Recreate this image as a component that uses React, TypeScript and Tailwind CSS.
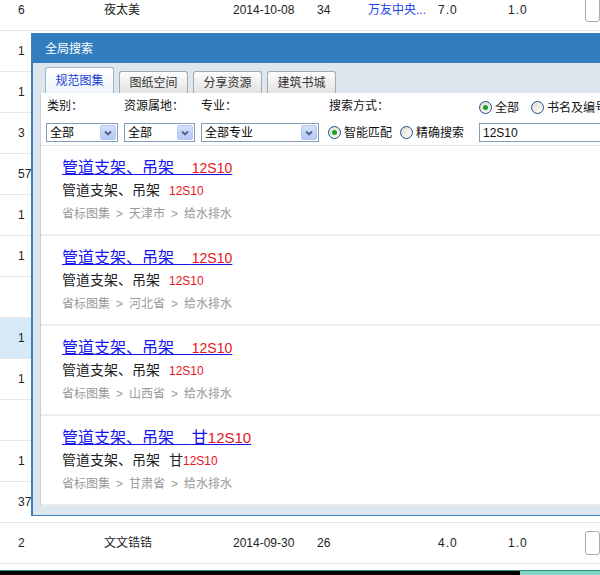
import React from "react";

const FONT = "font-['Liberation_Sans','Noto_Sans_CJK_SC',sans-serif]";

type Row = {
  n: string;
  name?: string;
  date?: string;
  c4?: string;
  link?: string;
  c6?: string;
  c7?: string;
  hl?: boolean;
};

const rows: Row[] = [
  { n: "6", name: "夜太美", date: "2014-10-08", c4: "34", link: "万友中央...", c6: "7.0", c7: "1.0" },
  { n: "1" },
  { n: "1" },
  { n: "3" },
  { n: "57" },
  { n: "1" },
  { n: "1" },
  { n: "" },
  { n: "1", hl: true },
  { n: "1" },
  { n: "" },
  { n: "1" },
  { n: "37" },
  { n: "2", name: "文文锆锆", date: "2014-09-30", c4: "26", c6: "4.0", c7: "1.0" },
];

const results = [
  { place: "天津市" },
  { place: "河北省" },
  { place: "山西省" },
  { place: "甘肃省", gan: true },
];

const Radio = ({ checked, label }: { checked?: boolean; label: string }) => (
  <span className="flex items-center gap-[3px]">
    <span className="flex h-[13px] w-[13px] items-center justify-center rounded-full border border-[#1c5180] bg-gradient-to-br from-[#dcdcd6] to-white">
      {checked && <span className="h-[5px] w-[5px] rounded-full bg-[#21a121]" />}
    </span>
    <span className="text-[12px] text-[#111]">{label}</span>
  </span>
);

const Select = ({ text, w }: { text: string; w: string }) => (
  <div className={"flex h-[19px] items-center border border-[#7f9db9] bg-white " + w}>
    <span className="flex-1 pl-[3px] text-[12px] leading-none text-black">{text}</span>
    <span className="mr-px flex h-[15px] w-[16px] items-center justify-center rounded-[2px] border border-[#b7c9f2] bg-gradient-to-b from-[#d3e0fc] to-[#b4c8f6]">
      <svg width="8" height="6" viewBox="0 0 8 6">
        <path d="M1 1.5 L4 4.5 L7 1.5" fill="none" stroke="#4d6185" strokeWidth="1.8" />
      </svg>
    </span>
  </div>
);

const TableRow = ({ r }: { r: Row }) => (
  <div
    className={
      "grid h-[41px] grid-cols-[104px_129px_84px_51px_70px_70px_77px_1fr] items-center border-b border-[#e8e8e8] text-[12px] text-[#222] " +
      (r.hl ? "bg-[#d5e9f8]" : "bg-white")
    }
  >
    <span className="pl-[18px]">{r.n}</span>
    <span>{r.name}</span>
    <span>{r.date}</span>
    <span>{r.c4}</span>
    <span className="text-[#1c44e6]">{r.link}</span>
    <span className="tracking-[1px]">{r.c6}</span>
    <span className="tracking-[1px]">{r.c7}</span>
    <span className="h-[24px] rounded-[3px] border border-[#aaa] bg-white" />
  </div>
);

const ResultItem = ({ place, gan }: { place: string; gan?: boolean }) => (
  <div className="h-[90px] border-b-2 border-[#ececec] pl-[21px] pt-[11px]">
    <div className="leading-[22px]">
      <a className="text-[16px] text-[#1515ee] underline decoration-[#1515ee] underline-offset-[1px]">
        管道支架、吊架{"\u00a0\u00a0\u00a0\u00a0"}
        {gan && "甘"}
        <span className={"text-[#e8141b] " + (gan ? "text-[15px]" : "text-[14px]")}>12S10</span>
      </a>
    </div>
    <div className="text-[14px] leading-[23px] text-[#222]">
      管道支架、吊架
      {gan && <span className="ml-[9px]">甘</span>}
      <span className={"text-[12px] text-[#e8141b] " + (gan ? "" : "ml-[9px]")}>12S10</span>
    </div>
    <div className="text-[12px] leading-[23px] text-[#9a9a9a]">
      省标图集<span className="px-[6px]">&gt;</span>
      {place}
      <span className="px-[6px]">&gt;</span>给水排水
    </div>
  </div>
);

export default function App() {
  return (
    <div className={"relative h-[575px] w-[600px] overflow-hidden bg-white " + FONT}>
      <div className="-mt-[10px]">
        {rows.map((r, i) => (
          <TableRow key={i} r={r} />
        ))}
      </div>
      <div className="mt-[6px] flex h-[5px] border-t border-[#2f8f83]">
        <div className="w-[520px] bg-black" />
        <div className="flex-1 bg-[#7fd4c4]" />
      </div>

      {/* global search dialog */}
      <div className="absolute left-[31px] top-[33px] w-[600px] border-b border-l-2 border-t border-[#3a7fc0] bg-[#dde6ee]">
        <div className="flex h-[29px] items-center bg-[#317dbd] pl-[12px] text-[12px] text-white">全局搜索</div>
        <div className="pb-[9px] pl-[7px]">
          <div className="flex h-[30px] items-end gap-[5px] pl-[5px]">
            <span className="flex h-[26px] w-[69px] items-center justify-center rounded-t-[3px] border border-b-0 border-[#9fb6cc] bg-gradient-to-b from-white to-[#eef4fa] text-[12px] text-[#1a3fd6]">
              规范图集
            </span>
            {["图纸空间", "分享资源", "建筑书城"].map((t) => (
              <span
                key={t}
                className="flex h-[22px] w-[69px] items-center justify-center rounded-t-[3px] border border-b-0 border-[#a8a8a8] bg-gradient-to-b from-[#fdfdfd] to-[#e2e2e2] text-[12px] text-[#333]"
              >
                {t}
              </span>
            ))}
          </div>
          <div className="border-l border-[#c8d0d8] bg-white">
            <div className="grid grid-cols-[78px_77px_127px_151px_1fr] grid-rows-[20px_19px] gap-y-[7px] border-b border-[#e6e3d6] pb-[3px] pl-[5px] pt-[3px] text-[12px] text-[#111]">
              <span className="flex items-center pl-px">类别：</span>
              <span className="flex items-center">资源属地：</span>
              <span className="flex items-center">专业：</span>
              <span className="flex items-center pl-px">搜索方式：</span>
              <span className="flex items-center gap-[12px] pt-[3px]">
                <Radio checked label="全部" />
                <Radio label="书名及编号" />
              </span>
              <Select text="全部" w="w-[72px]" />
              <Select text="全部" w="w-[71px]" />
              <Select text="全部专业" w="w-[118px]" />
              <span className="flex items-center gap-[8px]">
                <Radio checked label="智能匹配" />
                <Radio label="精确搜索" />
              </span>
              <div className="flex h-[19px] items-center border border-[#7f9db9] bg-white pl-[3px] text-[12px]">12S10</div>
            </div>
            {results.map((r) => (
              <ResultItem key={r.place} place={r.place} gan={r.gan} />
            ))}
          </div>
        </div>
      </div>
    </div>
  );
}
